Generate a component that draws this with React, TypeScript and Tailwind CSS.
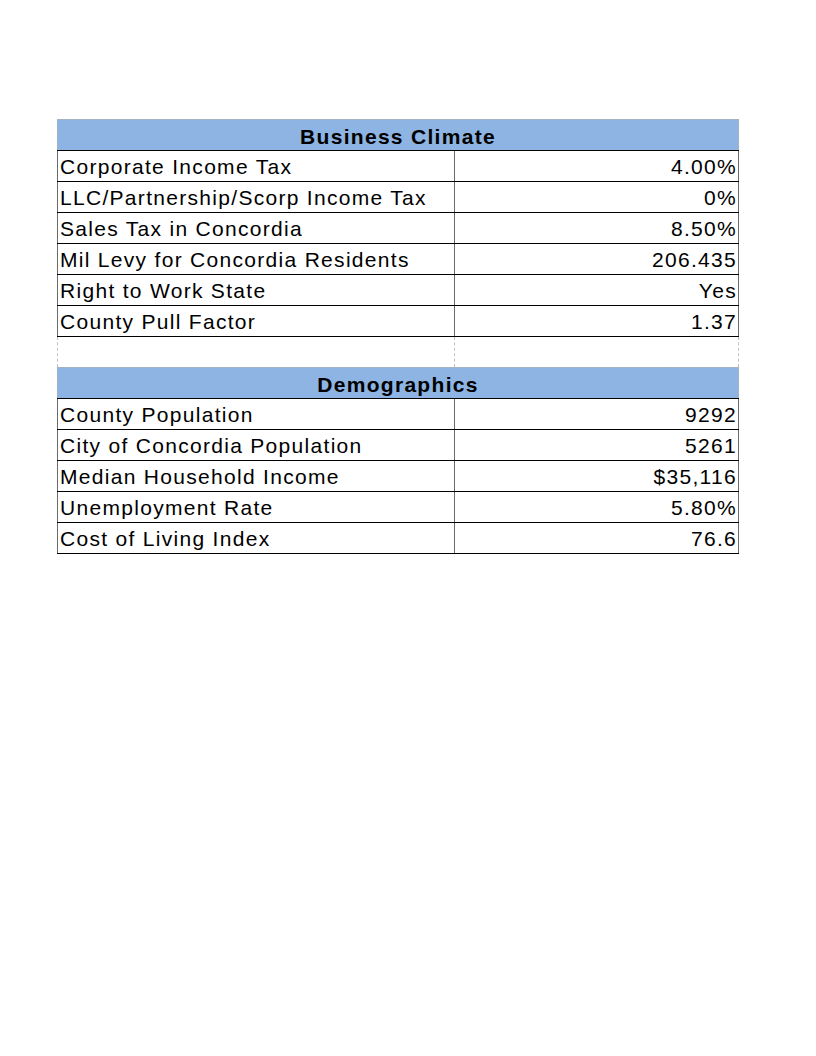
type Row = {
  label: string;
  value: string;
};

const businessClimate: Row[] = [
  { label: "Corporate Income Tax", value: "4.00%" },
  { label: "LLC/Partnership/Scorp Income Tax", value: "0%" },
  { label: "Sales Tax in Concordia", value: "8.50%" },
  { label: "Mil Levy for Concordia Residents", value: "206.435" },
  { label: "Right to Work State", value: "Yes" },
  { label: "County Pull Factor", value: "1.37" },
];

const demographics: Row[] = [
  { label: "County Population", value: "9292" },
  { label: "City of Concordia Population", value: "5261" },
  { label: "Median Household Income", value: "$35,116" },
  { label: "Unemployment Rate", value: "5.80%" },
  { label: "Cost of Living Index", value: "76.6" },
];

const Header = ({ title }: { title: string }) => (
  <div className="h-[31px] bg-[#8db4e2] border border-b-0 border-dashed border-[#b0b0b0] flex items-center justify-center pt-[3px] text-[21px] leading-none font-bold tracking-[1.3px] text-black">
    {title}
  </div>
);

const DataRow = ({ row }: { row: Row }) => (
  <div className="grid grid-cols-[398px_1fr] h-[31px] border-t border-black">
    <div className="border-l border-r border-[#6b6b6b] pl-[2px] pt-[1px] flex items-center text-[21px] leading-none tracking-[1.3px]">
      {row.label}
    </div>
    <div className="border-r border-[#6b6b6b] pr-[1px] pt-[1px] flex items-center justify-end text-[21px] leading-none tracking-[1.3px]">
      {row.value}
    </div>
  </div>
);

const App = () => {
  return (
    <div className="w-[816px] h-[1056px] bg-white pt-[119px] pl-[57px] font-['Liberation_Sans',Arial,sans-serif] text-black">
      <div className="w-[682px]">
        <Header title="Business Climate" />
        {businessClimate.map((row) => (
          <DataRow key={row.label} row={row} />
        ))}

        {/* empty spacer row with grid lines */}
        <div className="grid grid-cols-[398px_1fr] h-[31px] border-t border-black">
          <div className="border-l border-r border-dashed border-[#c0c0c0]" />
          <div className="border-r border-dashed border-[#c0c0c0]" />
        </div>

        <Header title="Demographics" />
        {demographics.map((row) => (
          <DataRow key={row.label} row={row} />
        ))}
        <div className="border-t border-black" />
      </div>
    </div>
  );
};

export default App;
